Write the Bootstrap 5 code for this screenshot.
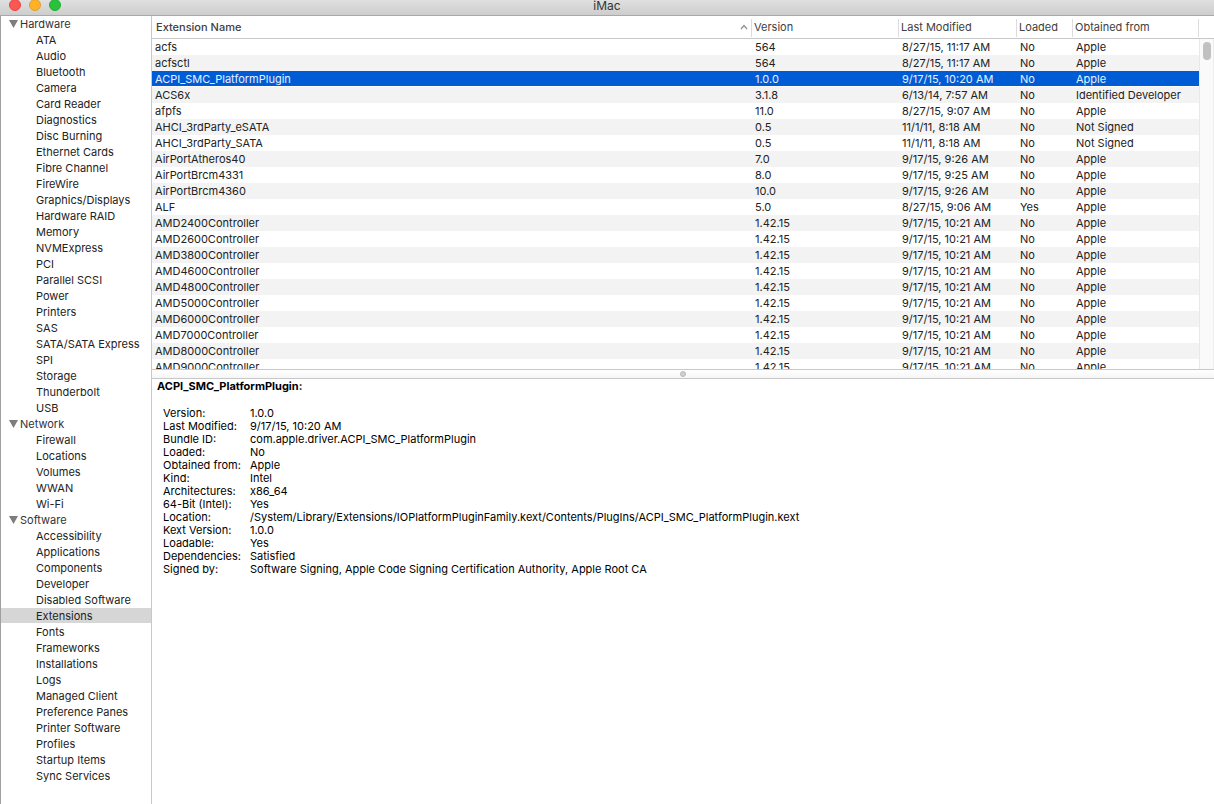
<!DOCTYPE html>
<html lang="en">
<head>
<meta charset="utf-8">
<meta name="viewport" content="width=device-width, initial-scale=1">
<title>iMac</title>
<link href="https://cdn.jsdelivr.net/npm/bootstrap@5.3.0/dist/css/bootstrap.min.css" rel="stylesheet">
<style>
body { font-family: Inter, "Liberation Sans", sans-serif; font-size: 11px; line-height: 16px; color: #222; background: #fff; }
.titlebar { height: 16px; background: linear-gradient(#e0e0e0, #cdcdcd); border-bottom: 1px solid #a9a9a9; font-size: 12px; line-height: 12px; color: #333; }
.lights { left: 9px; top: -1px; gap: 8px; }
.light { width: 12px; height: 12px; border-radius: 50%; border: 1px solid; padding: 0; }
.light-close { background: #fc5753; border-color: #df4744; }
.light-min { background: #fdb224; border-color: #de9f34; }
.light-zoom { background: #28c33b; border-color: #27aa35; }
.sidebar { width: 152px; border-left: 1px solid #a0a0a0; border-right: 1px solid #c8c8c8; }
.group-btn { height: 16px; padding: 0 0 0 8px; gap: 2px; color: #333; }
.side-link { height: 16px; padding-left: 35px; color: #222; }
.side-link.active { background: linear-gradient(#d6d6d6 15px, #fff 15px); }
.list-pane { flex: 353 1 0; min-height: 0; }
.detail-pane { flex: 423 1 0; min-height: 0; color: #000; line-height: 13px; padding: 1px 5px; }
.splitter { height: 10px; border-top: 1px solid #c8c8c8; border-bottom: 1px solid #c8c8c8; background: linear-gradient(#fff, #f6f6f6); }
.grip { width: 6px; height: 6px; border-radius: 50%; background: #cfcfcf; border: 1px solid #b9b9b9; }
.kexts { table-layout: fixed; border-collapse: separate; border-spacing: 0; }
.kexts th { position: sticky; top: 0; height: 23px; padding: 0 0 0 2px; font-weight: 400; color: #404040; background: linear-gradient(#dcdcdc, #dcdcdc) right 3px / 1px 18px no-repeat #fff; background-position: right 3px; border-bottom: 1px solid #c8c8c8; vertical-align: middle; }
.kexts th:first-child { font-weight: 500; padding-left: 4px; }
.kexts td { height: 16px; padding: 0 0 0 3px; }
.kexts tbody tr:nth-child(even) { background: #f3f3f3; }
.kexts tbody tr.chosen { background: linear-gradient(#005cd5 15px, #fff 15px); color: #e6f0ff; }
.scroll-view { overflow: hidden; }
.col-version { width: 147px; } .col-modified { width: 118px; } .col-loaded { width: 56px; } .col-source { width: 126px; }
.gutter { width: 15px; }
.gutter-head { height: 23px; border-bottom: 1px solid #c8c8c8; }
.track { background: #fafafa; border-left: 1px solid #e8e8e8; border-right: 1px solid #ededed; padding: 3px 2px 0 3px; }
.thumb { width: 8px; height: 18px; border-radius: 4px; background: #c1c1c1; }
.detail-pane h1 { font-size: 11px; line-height: 13px; font-weight: 700; margin: 0 0 14px; }
.facts { display: grid; grid-template-columns: 87px 1fr; margin: 0 0 0 6px; }
.facts dt, .facts dd { font-weight: 400; margin: 0; }
</style>
</head>
<body class="d-flex flex-column vh-100 overflow-hidden">
<header class="titlebar position-relative text-center flex-shrink-0">
  <div class="lights position-absolute d-flex">
    <button class="light light-close" type="button" aria-label="Close"></button>
    <button class="light light-min" type="button" aria-label="Minimize"></button>
    <button class="light light-zoom" type="button" aria-label="Zoom"></button>
  </div>
  iMac
</header>
<div class="d-flex flex-grow-1 overflow-hidden">
  <nav class="sidebar flex-shrink-0 overflow-hidden" aria-label="Contents">
    <button type="button" class="group-btn d-flex align-items-center border-0 bg-transparent w-100"><svg width="9" height="8" viewBox="0 0 9 8" aria-hidden="true"><path d="M0 0h9L4.500 8z" fill="#7d7d7d"/></svg>Hardware</button>
    <div class="d-flex flex-column">
      <a href="#" class="side-link text-decoration-none">ATA</a>
      <a href="#" class="side-link text-decoration-none">Audio</a>
      <a href="#" class="side-link text-decoration-none">Bluetooth</a>
      <a href="#" class="side-link text-decoration-none">Camera</a>
      <a href="#" class="side-link text-decoration-none">Card Reader</a>
      <a href="#" class="side-link text-decoration-none">Diagnostics</a>
      <a href="#" class="side-link text-decoration-none">Disc Burning</a>
      <a href="#" class="side-link text-decoration-none">Ethernet Cards</a>
      <a href="#" class="side-link text-decoration-none">Fibre Channel</a>
      <a href="#" class="side-link text-decoration-none">FireWire</a>
      <a href="#" class="side-link text-decoration-none">Graphics/Displays</a>
      <a href="#" class="side-link text-decoration-none">Hardware RAID</a>
      <a href="#" class="side-link text-decoration-none">Memory</a>
      <a href="#" class="side-link text-decoration-none">NVMExpress</a>
      <a href="#" class="side-link text-decoration-none">PCI</a>
      <a href="#" class="side-link text-decoration-none">Parallel SCSI</a>
      <a href="#" class="side-link text-decoration-none">Power</a>
      <a href="#" class="side-link text-decoration-none">Printers</a>
      <a href="#" class="side-link text-decoration-none">SAS</a>
      <a href="#" class="side-link text-decoration-none">SATA/SATA Express</a>
      <a href="#" class="side-link text-decoration-none">SPI</a>
      <a href="#" class="side-link text-decoration-none">Storage</a>
      <a href="#" class="side-link text-decoration-none">Thunderbolt</a>
      <a href="#" class="side-link text-decoration-none">USB</a>
    </div>
    <button type="button" class="group-btn d-flex align-items-center border-0 bg-transparent w-100"><svg width="9" height="8" viewBox="0 0 9 8" aria-hidden="true"><path d="M0 0h9L4.500 8z" fill="#7d7d7d"/></svg>Network</button>
    <div class="d-flex flex-column">
      <a href="#" class="side-link text-decoration-none">Firewall</a>
      <a href="#" class="side-link text-decoration-none">Locations</a>
      <a href="#" class="side-link text-decoration-none">Volumes</a>
      <a href="#" class="side-link text-decoration-none">WWAN</a>
      <a href="#" class="side-link text-decoration-none">Wi-Fi</a>
    </div>
    <button type="button" class="group-btn d-flex align-items-center border-0 bg-transparent w-100"><svg width="9" height="8" viewBox="0 0 9 8" aria-hidden="true"><path d="M0 0h9L4.500 8z" fill="#7d7d7d"/></svg>Software</button>
    <div class="d-flex flex-column">
      <a href="#" class="side-link text-decoration-none">Accessibility</a>
      <a href="#" class="side-link text-decoration-none">Applications</a>
      <a href="#" class="side-link text-decoration-none">Components</a>
      <a href="#" class="side-link text-decoration-none">Developer</a>
      <a href="#" class="side-link text-decoration-none">Disabled Software</a>
      <a href="#" class="side-link text-decoration-none active" aria-current="page">Extensions</a>
      <a href="#" class="side-link text-decoration-none">Fonts</a>
      <a href="#" class="side-link text-decoration-none">Frameworks</a>
      <a href="#" class="side-link text-decoration-none">Installations</a>
      <a href="#" class="side-link text-decoration-none">Logs</a>
      <a href="#" class="side-link text-decoration-none">Managed Client</a>
      <a href="#" class="side-link text-decoration-none">Preference Panes</a>
      <a href="#" class="side-link text-decoration-none">Printer Software</a>
      <a href="#" class="side-link text-decoration-none">Profiles</a>
      <a href="#" class="side-link text-decoration-none">Startup Items</a>
      <a href="#" class="side-link text-decoration-none">Sync Services</a>
    </div>
  </nav>
  <main class="d-flex flex-column flex-grow-1 overflow-hidden">
    <section class="list-pane d-flex overflow-hidden">
      <div class="scroll-view flex-grow-1">
        <table class="kexts w-100">
          <colgroup><col><col class="col-version"><col class="col-modified"><col class="col-loaded"><col class="col-source"></colgroup>
          <thead><tr>
            <th scope="col" aria-sort="ascending"><div class="d-flex justify-content-between align-items-center pe-1">Extension Name<svg width="8" height="6" viewBox="0 0 8 6" aria-hidden="true"><path d="M1 5l3-3.500L7 5" fill="none" stroke="#909090" stroke-width="1.200"/></svg></div></th>
            <th scope="col">Version</th><th scope="col">Last Modified</th><th scope="col">Loaded</th><th scope="col">Obtained from</th>
          </tr></thead>
          <tbody>
            <tr><td>acfs</td><td>564</td><td>8/27/15, 11:17 AM</td><td>No</td><td>Apple</td></tr>
            <tr><td>acfsctl</td><td>564</td><td>8/27/15, 11:17 AM</td><td>No</td><td>Apple</td></tr>
            <tr class="chosen"><td>ACPI_SMC_PlatformPlugin</td><td>1.0.0</td><td>9/17/15, 10:20 AM</td><td>No</td><td>Apple</td></tr>
            <tr><td>ACS6x</td><td>3.1.8</td><td>6/13/14, 7:57 AM</td><td>No</td><td>Identified Developer</td></tr>
            <tr><td>afpfs</td><td>11.0</td><td>8/27/15, 9:07 AM</td><td>No</td><td>Apple</td></tr>
            <tr><td>AHCI_3rdParty_eSATA</td><td>0.5</td><td>11/1/11, 8:18 AM</td><td>No</td><td>Not Signed</td></tr>
            <tr><td>AHCI_3rdParty_SATA</td><td>0.5</td><td>11/1/11, 8:18 AM</td><td>No</td><td>Not Signed</td></tr>
            <tr><td>AirPortAtheros40</td><td>7.0</td><td>9/17/15, 9:26 AM</td><td>No</td><td>Apple</td></tr>
            <tr><td>AirPortBrcm4331</td><td>8.0</td><td>9/17/15, 9:25 AM</td><td>No</td><td>Apple</td></tr>
            <tr><td>AirPortBrcm4360</td><td>10.0</td><td>9/17/15, 9:26 AM</td><td>No</td><td>Apple</td></tr>
            <tr><td>ALF</td><td>5.0</td><td>8/27/15, 9:06 AM</td><td>Yes</td><td>Apple</td></tr>
            <tr><td>AMD2400Controller</td><td>1.42.15</td><td>9/17/15, 10:21 AM</td><td>No</td><td>Apple</td></tr>
            <tr><td>AMD2600Controller</td><td>1.42.15</td><td>9/17/15, 10:21 AM</td><td>No</td><td>Apple</td></tr>
            <tr><td>AMD3800Controller</td><td>1.42.15</td><td>9/17/15, 10:21 AM</td><td>No</td><td>Apple</td></tr>
            <tr><td>AMD4600Controller</td><td>1.42.15</td><td>9/17/15, 10:21 AM</td><td>No</td><td>Apple</td></tr>
            <tr><td>AMD4800Controller</td><td>1.42.15</td><td>9/17/15, 10:21 AM</td><td>No</td><td>Apple</td></tr>
            <tr><td>AMD5000Controller</td><td>1.42.15</td><td>9/17/15, 10:21 AM</td><td>No</td><td>Apple</td></tr>
            <tr><td>AMD6000Controller</td><td>1.42.15</td><td>9/17/15, 10:21 AM</td><td>No</td><td>Apple</td></tr>
            <tr><td>AMD7000Controller</td><td>1.42.15</td><td>9/17/15, 10:21 AM</td><td>No</td><td>Apple</td></tr>
            <tr><td>AMD8000Controller</td><td>1.42.15</td><td>9/17/15, 10:21 AM</td><td>No</td><td>Apple</td></tr>
            <tr><td>AMD9000Controller</td><td>1.42.15</td><td>9/17/15, 10:21 AM</td><td>No</td><td>Apple</td></tr>
          </tbody>
        </table>
      </div>
      <div class="gutter d-flex flex-column flex-shrink-0">
        <div class="gutter-head"></div>
        <div class="track flex-grow-1"><div class="thumb"></div></div>
      </div>
    </section>
    <div class="splitter d-flex align-items-center justify-content-center flex-shrink-0"><span class="grip"></span></div>
    <section class="detail-pane">
      <h1>ACPI_SMC_PlatformPlugin:</h1>
      <dl class="facts">
        <dt>Version:</dt><dd>1.0.0</dd>
        <dt>Last Modified:</dt><dd>9/17/15, 10:20 AM</dd>
        <dt>Bundle ID:</dt><dd>com.apple.driver.ACPI_SMC_PlatformPlugin</dd>
        <dt>Loaded:</dt><dd>No</dd>
        <dt>Obtained from:</dt><dd>Apple</dd>
        <dt>Kind:</dt><dd>Intel</dd>
        <dt>Architectures:</dt><dd>x86_64</dd>
        <dt>64-Bit (Intel):</dt><dd>Yes</dd>
        <dt>Location:</dt><dd>/System/Library/Extensions/IOPlatformPluginFamily.kext/Contents/PlugIns/ACPI_SMC_PlatformPlugin.kext</dd>
        <dt>Kext Version:</dt><dd>1.0.0</dd>
        <dt>Loadable:</dt><dd>Yes</dd>
        <dt>Dependencies:</dt><dd>Satisfied</dd>
        <dt>Signed by:</dt><dd>Software Signing, Apple Code Signing Certification Authority, Apple Root CA</dd>
      </dl>
    </section>
  </main>
</div>
<script src="https://cdn.jsdelivr.net/npm/bootstrap@5.3.0/dist/js/bootstrap.bundle.min.js"></script>
</body>
</html>
